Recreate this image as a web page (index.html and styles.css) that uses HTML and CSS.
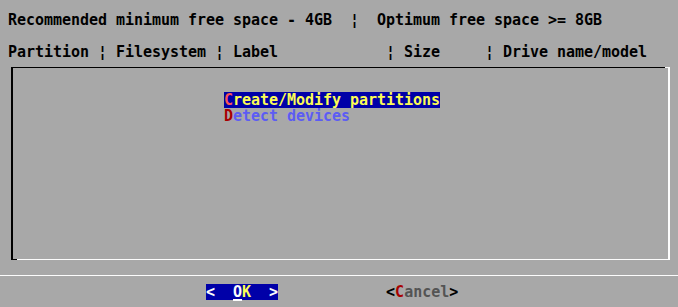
FILE: index.html
```html
<!DOCTYPE html>
<html>
<head>
<meta charset="utf-8">
<link rel="stylesheet" href="styles.css">
</head>
<body>
<div class="screen">
  <div class="row info">Recommended minimum free space - 4GB  ¦  Optimum free space &gt;= 8GB</div>
  <div class="row header">Partition ¦ Filesystem ¦ Label            ¦ Size     ¦ Drive name/model</div>
  <div class="box">
    <div class="menu">
      <div class="item selected"><span class="hot-sel">C</span>reate/Modify partitions</div>
      <div class="item"><span class="hot">D</span>etect devices</div>
    </div>
  </div>
  <div class="sep"></div>
  <div class="buttons">
    <div class="btn btn-active"><span class="br">&lt;</span>  <span class="ul">O</span><span class="key">K</span>  <span class="br">&gt;</span></div>
    <div class="btn btn-idle"><span class="br-dark">&lt;</span><span class="hot">C</span>ancel<span class="br-dark">&gt;</span></div>
  </div>
</div>
</body>
</html>
```

FILE: styles.css
```css
html, body {
  margin: 0;
  padding: 0;
}

body {
  width: 678px;
  height: 307px;
  overflow: hidden;
  background: #a8a8a8;
  color: #000;
  font-family: "DejaVu Sans Mono", "Liberation Mono", monospace;
  font-weight: bold;
  font-size: 15px;
  letter-spacing: -0.03px;
  line-height: 16px;
}

.screen {
  padding-top: 12px;
}

.row {
  padding-left: 8px;
  height: 16px;
  white-space: pre;
}

.header {
  margin-top: 16px;
}

.box {
  position: relative;
  box-sizing: border-box;
  margin: 7px 0 0 11px;
  width: 659px;
  height: 193px;
  border-top: 1px solid #000;
  border-left: 2px solid #000;
  border-right: 2px solid #fcfcfc;
  border-bottom: 1px solid #fcfcfc;
  padding: 24px 0 0 211px;
}

.box::after {
  content: "";
  position: absolute;
  top: -1px;
  right: -2px;
  width: 5px;
  height: 1px;
  background: #fcfcfc;
}

.box::before {
  content: "";
  position: absolute;
  bottom: -1px;
  left: -2px;
  width: 6px;
  height: 1px;
  background: #000;
}

.menu {
  display: flex;
  flex-direction: column;
  align-items: flex-start;
}

.item {
  height: 16px;
  white-space: pre;
  color: #5c5cf4;
}

.item.selected {
  background: #0000a8;
  color: #fcfc54;
}

.hot-sel {
  color: #fc5454;
}

.hot {
  color: #a80000;
}

.sep {
  margin-top: 15px;
  height: 1px;
  background: #fcfcfc;
}

.buttons {
  margin-top: 8px;
  padding-left: 206px;
  display: flex;
  gap: 108px;
}

.btn {
  height: 16px;
  white-space: pre;
}

.btn-active {
  background: #0000a8;
  color: #fcfcfc;
}

.br {
  color: #fcfcfc;
}

.ul {
  color: #fcfcfc;
  text-decoration: underline;
  text-decoration-thickness: 2px;
  text-underline-offset: 2px;
}

.key {
  color: #fcfc54;
}

.btn-idle {
  color: #545454;
}

.br-dark {
  color: #000;
}
```
